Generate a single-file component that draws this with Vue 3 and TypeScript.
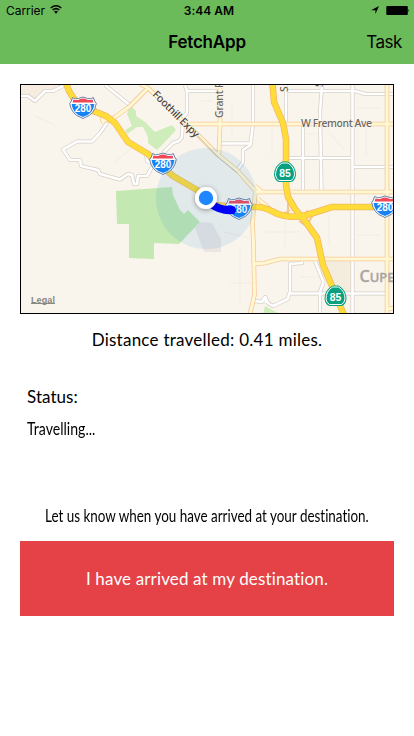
<script setup lang="ts">
interface Shield { x: number; y: number }

const streets: string[] = [
  'M20 96H28L35 101L41 95L45 91L53 91L63 86',
  'M107 123L100 133L92 141.500H77L63 149.500L70 160H80L81 166L98 170L100 174L120 179.500L128 174L132 175L134 184L137 184L138 176H147L152 167',
  'M105 85L131 106',
  'M146 152L147 161L153 164',
  'M185 85L187 91V113L183 117L182 137L179 141L173 143L163 153',
  'M187 91H220',
  'M253 85V123L250.500 145L243 150V162L238 169',
  'M220 143.500H250',
  'M286 85V123',
  'M322 85L320 113L321.500 192',
  'M303 124V192',
  'M288 158H352',
  'M354 167H394',
  'M288 91H355L365 94H394',
  'M352.500 85V313',
  'M255 301L262 302L265 297L268 303L273 306L288 299L289 293.500H385',
  'M290 293V264L302 263V260',
  'M315 261L323.500 282L320 292V313',
  'M265 296L266 303',
]

const avenues: string[] = [
  'M140 84L148 88L198 135L218 155L237 170L255.500 191L252.500 222L253.500 245L254.500 295L250 314',
  'M148 88L129 107L115 117L111 121L102 119L104 123',
  'M220 84V124L219 154',
  'M189 124H395',
  'M255 192H395',
  'M255 264L265 263L280 259H395',
  'M387 84V314',
  'M387 309L395 308',
  'M255 186L262 192M258 199L264 204L270 209',
]

const freeways: string[] = [
  'M66 83L69 91L74 99L81 107L96 112L106 116L115 123L128 142L148 154L173 176L197 190L213 205Q233 207 257 207C270 207 274 215 286 216Q296 218 307 215L332 207H396',
  'M272.500 83L274 102L283 123L286 139V185L288 197L295 209L305 221L317 238L323 265L332 286L344 315',
]

const interstates: Shield[] = [
  { x: 83, y: 107.500 }, { x: 163, y: 163.500 }, { x: 239, y: 208.500 }, { x: 385, y: 206.500 },
]
const stateRoutes: Shield[] = [{ x: 285, y: 172 }, { x: 335.500, y: 296 }]
</script>

<template>
  <main class="screen">
    <header>
      <div class="status-bar">
        <div class="carrier">
          <span>Carrier</span>
          <svg class="wifi" width="12" height="9" viewBox="0 0 12 9">
            <path d="M.7 3Q6-1.300 11.300 3M2.600 5Q6 2.200 9.400 5" fill="none" stroke="#000" stroke-width="1.500" />
            <path d="M4 6.500Q6 5 8 6.500L6 8.700Z" />
          </svg>
        </div>
        <div class="clock">3:44 AM</div>
        <div class="indicators">
          <svg width="8" height="8" viewBox="0 0 8 8"><path d="M8 0L4.400 8V4.300H0Z" /></svg>
          <svg width="24" height="9" viewBox="0 0 24 9">
            <rect x=".3" width="21.500" height="9" rx="1" /><path d="M22.500 3Q24 4.500 22.500 6Z" />
          </svg>
        </div>
      </div>
      <nav>
        <h1>FetchApp</h1>
        <button class="task">Task</button>
      </nav>
    </header>

    <section class="map">
      <svg viewBox="21 85 372 228" width="372" height="228">
        <defs>
          <filter id="dot-shadow" x="-50%" y="-50%" width="200%" height="200%">
            <feDropShadow dx="0" dy="1" stdDeviation="2.500" flood-opacity=".4" />
          </filter>
        </defs>
        <rect x="21" y="85" width="372" height="228" fill="#f9f5ed" />
        <path d="M20 84H65L54 91H44L35 101L28 95H20Z" fill="#f6ecdf" />
        <path d="M325 261H351V293H334Z" fill="#f4ecdc" />
        <path d="M130 105L136 111V116L145 122L155 132L172 125L176 130L165 142L157 150L148 143L148 137L143 127L137 127L127 134L125 130L132 126L127 114Z" fill="#cfecbb" />
        <path d="M265 306L280 314H263Z" fill="#cfecbb" />
        <path d="M116 191L172 187L173 195L180 210L184 214L188 210L200 222L179 244L154 243V259L129 258V224H117Z" fill="#c3e8b1" />
        <path d="M195 228L200 222L212 223L221 239V252H204Z" fill="#ebe6e2" />
        <path d="M35 116L55 125M115 162L135 145M232 103V136M200 101H212M308 134H316M329 132L345 151M272 126V155M224 232L250 238M230 283H251M240 249V303M265 232H300M285 220V249M357 108H382M366 125V155M357 235H380M329 215V246M300 277H314" fill="none" stroke="#f2ece3" stroke-width="1" />
        <g class="street-casing"><path v-for="d in streets" :key="d" :d="d" /></g>
        <g class="street"><path v-for="d in streets" :key="d" :d="d" /></g>
        <g class="avenue-casing"><path v-for="d in avenues" :key="d" :d="d" /></g>
        <g class="avenue"><path v-for="d in avenues" :key="d" :d="d" /></g>
        <path d="M198 136L218 157L237 173" fill="none" stroke="#c8beb4" />
        <path d="M288 201V214M290 210L283 214M313 215L307 225M306 211L316 214M299 221L309 228" fill="none" stroke="#f7c68b" stroke-width="2" />
        <g class="freeway-casing"><path v-for="d in freeways" :key="d" :d="d" /></g>
        <g class="freeway"><path v-for="d in freeways" :key="d" :d="d" /></g>

        <g class="label">
          <text transform="translate(152 95) rotate(45)" textLength="61">Foothill Expy</text>
          <text transform="translate(222.500 118) rotate(-90)" textLength="43" class="soft">Grant Rd</text>
          <text transform="translate(288 92) rotate(-90)" class="soft">S</text>
          <text transform="translate(323 87) rotate(-90)" class="soft">S</text>
          <text x="301" y="127" textLength="71" class="soft">W Fremont Ave</text>
        </g>
        <text class="city" x="359.500" y="282">C<tspan class="city-small">UPE</tspan></text>

        <g v-for="s in interstates" :key="`i${s.x}`" :transform="`translate(${s.x} ${s.y}) scale(.95 1)`">
          <path d="M-11-10Q-8-8-5-9Q0-12 5-9Q8-8 11-10Q12-6 14-4Q12 7 2 10L0 11L-2 10Q-12 7-14-4Q-12-6-11-10Z" fill="#fff" stroke="#657ba3" />
          <path d="M-10-8Q-6-7-4-8Q0-10 4-8Q6-7 10-8L11-5H-11Z" fill="#ef4858" />
          <path d="M-12-3.500H12Q11 6 1 9L0 9.500L-1 9Q-11 6-12-3.500Z" fill="#1683f4" />
          <text class="route" y="4" textLength="17.500" lengthAdjust="spacingAndGlyphs">280</text>
        </g>
        <g v-for="s in stateRoutes" :key="`s${s.x}`" :transform="`translate(${s.x} ${s.y})`">
          <path d="M-3-10.500H3Q11-6 11 3Q10 9 6 10H-6Q-10 9-11 3Q-11-6-3-10.500Z" fill="#08a080" />
          <path d="M-3-9H3Q9.500-5 9.500 3Q9 7 6 8.500H-6Q-9 7-9.500 3Q-9.500-5-3-9Z" fill="none" stroke="#fff" stroke-width="1" />
          <text class="route" y="4.500" textLength="11.500" lengthAdjust="spacingAndGlyphs">85</text>
        </g>

        <circle cx="206.500" cy="198.500" r="50.500" fill="#2288dc" fill-opacity=".11" />
        <path d="M211 204Q221 211 232 210" fill="none" stroke="#0000ff" stroke-width="8" stroke-linecap="round" />
        <circle cx="206" cy="198" r="11" fill="#fff" filter="url(#dot-shadow)" />
        <circle cx="206" cy="198" r="7.200" fill="#1e87ff" />
        <text class="legal" x="31" y="303" textLength="24">Legal</text>
        <path d="M31 303.500H55" stroke="#8b8781" />
      </svg>
    </section>

    <p class="distance"><span>Distance travelled: 0.41 miles.</span></p>
    <section class="status">
      <p class="status-title"><span>Status:</span></p>
      <p class="status-value"><span>Travelling...</span></p>
    </section>
    <p class="hint"><span>Let us know when you have arrived at your destination.</span></p>
    <button class="arrived"><span>I have arrived at my destination.</span></button>
  </main>
</template>

<style>
body { margin: 0; background: #fff; }
</style>

<style scoped>
.screen { width: 414px; height: 736px; overflow: hidden; background: #fff; color: #000; font-family: Lato, "Open Sans", sans-serif; font-variant-ligatures: none; }
header { height: 64px; background: #6cbb5b; font-family: Inter, Roboto, sans-serif; }
.status-bar { height: 20px; display: grid; grid-template-columns: 1fr 1fr 1fr; align-items: center; padding: 0 6px; font-size: 12px; }
.carrier { display: flex; align-items: center; gap: 5px; letter-spacing: -.05px; }
.wifi { margin-top: -2px; }
.clock { text-align: center; font-weight: 600; padding-top: 1px; padding-left: 4px; }
.indicators { display: flex; justify-content: flex-end; align-items: center; gap: 7px; margin-right: -2px; }
nav { height: 44px; display: grid; grid-template-columns: 1fr auto 1fr; align-items: center; padding: 0 12px; }
h1 { grid-column: 2; margin: 0; font-size: 17px; line-height: 44px; font-weight: 600; letter-spacing: -.2px; }
.task { justify-self: end; border: 0; padding: 0; background: none; color: #000; font: 17px Inter, sans-serif; letter-spacing: -.45px; }
button { border-radius: 0; }
.map { width: 372px; height: 228px; margin: 20px 20px 0; border: 1px solid #000; }
.map svg { display: block; }
.street-casing, .street, .avenue-casing, .avenue, .freeway-casing, .freeway { fill: none; stroke-linejoin: round; }
.street-casing { stroke: #d5cec5; stroke-width: 4; }
.street { stroke: #fff; stroke-width: 2.600; }
.avenue-casing { stroke: #f6c998; stroke-width: 4.600; }
.avenue { stroke: #fff8d2; stroke-width: 3; }
.freeway-casing { stroke: #f3b765; stroke-width: 6.600; }
.freeway { stroke: #ffdc38; stroke-width: 5; }
.label { font: 500 10.500px "Noto Sans", sans-serif; fill: #49433d; paint-order: stroke; stroke: #f9f5ed; stroke-width: 1.500px; }
.label .soft { fill: #6d6760; }
.city { font: 500 16px "Noto Sans", sans-serif; fill: #aaa59f; stroke: #aaa59f; stroke-width: .4px; }
.city-small { font-size: 13px; }
.route { font: 700 10px "Liberation Sans", sans-serif; fill: #fff; text-anchor: middle; }
.legal { font: 700 9px "Liberation Sans", sans-serif; fill: #8b8781; }
p { margin: 0; white-space: nowrap; }
.distance span, .status span, .hint span, .arrived span { display: inline-block; }
.distance { height: 50px; line-height: 51px; text-align: center; font-size: 17px; }
.distance span { letter-spacing: .25px; }
.status { padding: 18px 27px 0; }
.status-title { height: 30px; line-height: 30px; font-size: 17px; letter-spacing: .05px; }
.status-value { height: 34px; line-height: 33px; font-size: 17px; }
.status-value span { transform: scaleX(.83); transform-origin: left; }
.hint { height: 50px; line-height: 49px; margin-top: 45px; display: flex; justify-content: center; font-size: 17px; }
.hint span { transform: scaleX(.79); }
.arrived { display: block; width: 374px; height: 75px; margin: 0 20px; border: 0; padding: 0; background: #e44246; color: #fff; font: 17px Lato, sans-serif; letter-spacing: .14px; }
</style>
